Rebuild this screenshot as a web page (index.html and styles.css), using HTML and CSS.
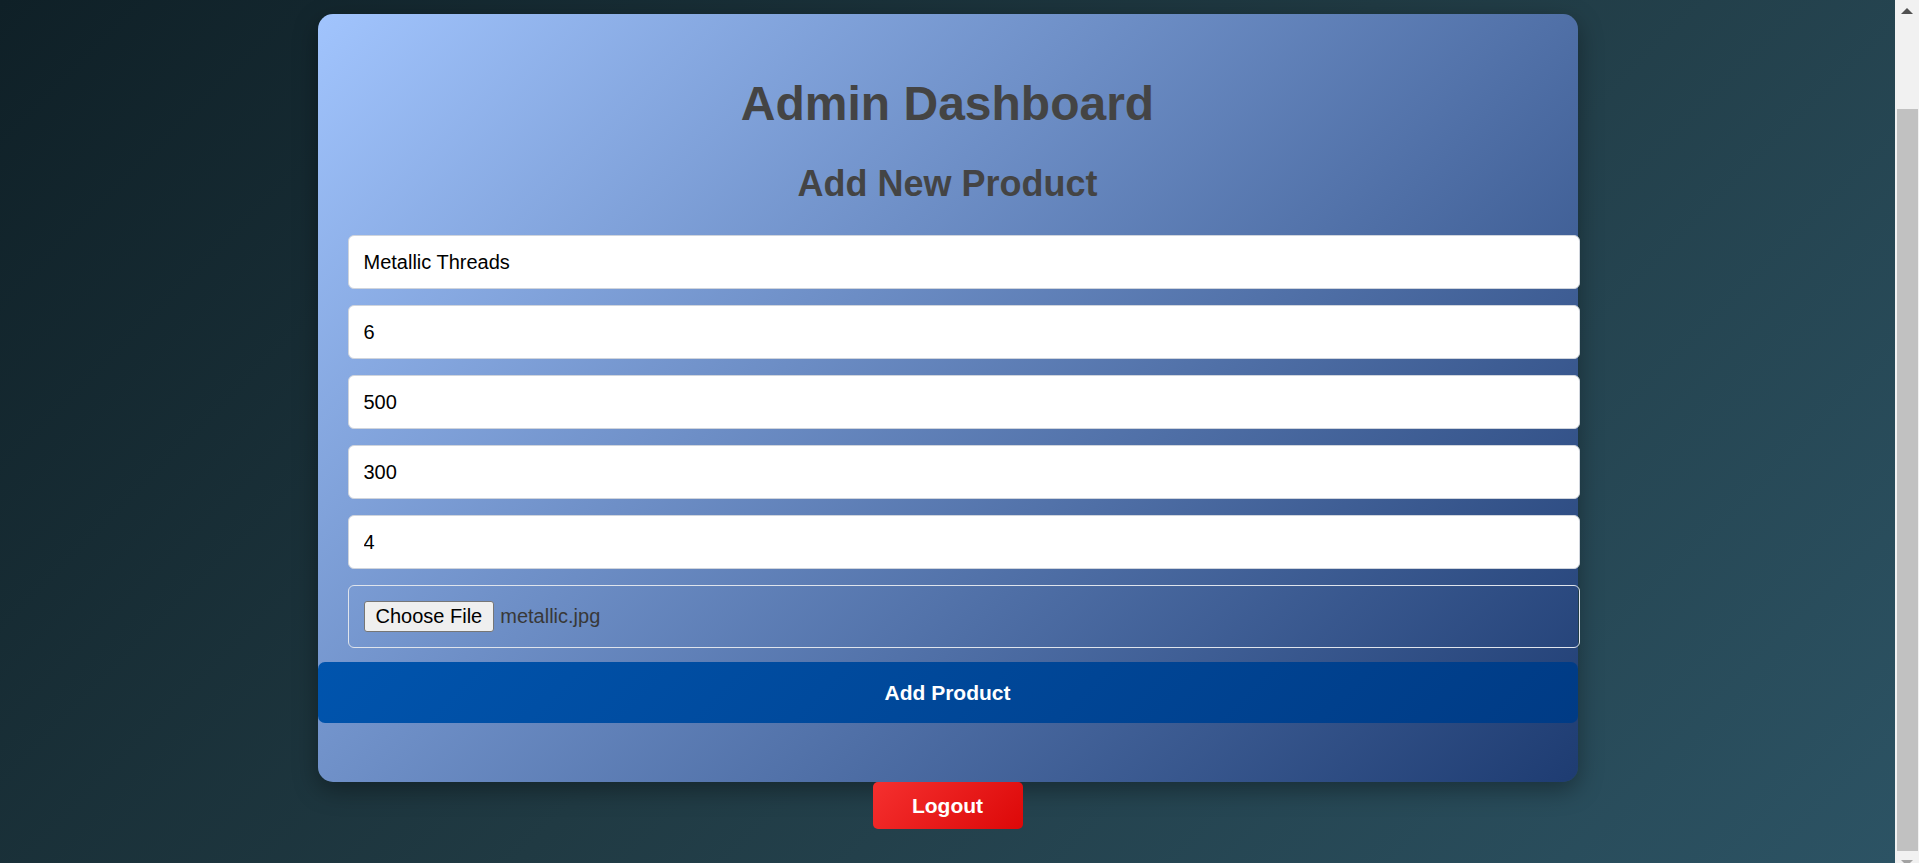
FILE: index.html
```html
<!DOCTYPE html>
<html lang="en">
<head>
<meta charset="utf-8">
<title>Admin Dashboard</title>
<link rel="stylesheet" href="styles.css">
</head>
<body>
  <div class="page">
    <div class="card">
      <h1 class="title">Admin Dashboard</h1>
      <h2 class="subtitle">Add New Product</h2>
      <form class="product-form">
        <input class="field" type="text" value="Metallic Threads">
        <input class="field" type="text" value="6">
        <input class="field" type="text" value="500">
        <input class="field" type="text" value="300">
        <input class="field" type="text" value="4">
        <label class="file-field">
          <span class="file-btn">Choose File</span>
          <span class="file-name">metallic.jpg</span>
        </label>
        <button class="submit-btn" type="button">Add Product</button>
      </form>
    </div>
    <button class="logout-btn" type="button">Logout</button>
  </div>
  <div class="scrollbar" aria-hidden="true">
    <div class="sb-top"><span class="sb-arrow-up"></span></div>
    <div class="sb-thumb"></div>
    <div class="sb-bottom"><span class="sb-arrow-down"></span></div>
  </div>
</body>
</html>
```

FILE: styles.css
```css
html, body {
  margin: 0;
  padding: 0;
  height: 100%;
}

body {
  display: flex;
  height: 100vh;
  overflow: hidden;
  font-family: "Liberation Sans", Arial, sans-serif;
}

.page {
  flex: 1;
  min-width: 0;
  display: flex;
  flex-direction: column;
  align-items: center;
  padding-top: 14px;
  background: linear-gradient(135deg, #0f2027 0%, #203a43 50%, #2c5364 100%);
}

.card {
  width: 1200px;
  padding: 30px;
  border-radius: 15px;
  background: linear-gradient(135deg, #a1c4fd 0%, #1e3c72 100%);
  box-shadow: 0 8px 24px rgba(0, 0, 0, 0.35);
}

.title {
  margin: 32px 0 0;
  font-size: 48px;
  font-weight: bold;
  color: #444;
  text-align: center;
}

.subtitle {
  margin: 32px 0 30px;
  font-size: 36px;
  font-weight: bold;
  color: #444;
  text-align: center;
}

.product-form {
  display: flex;
  flex-direction: column;
  margin: 0 0 29px;
}

.field {
  display: block;
  box-sizing: content-box;
  width: 100%;
  margin: 0 0 16px;
  padding: 15px;
  border: 1px solid #cfd4dc;
  border-radius: 6px;
  background: #fff;
  font-family: "Liberation Sans", Arial, sans-serif;
  font-size: 20px;
  line-height: 22px;
  color: #000;
  outline: none;
}

.file-field {
  display: flex;
  align-items: center;
  box-sizing: content-box;
  width: 100%;
  margin: 0 0 14px;
  padding: 15px;
  border: 1px solid #dfe4ec;
  border-radius: 6px;
  font-size: 20px;
  color: #333;
}

.file-btn {
  display: inline-block;
  padding: 3px 11px;
  line-height: 23px;
  border: 1px solid #767676;
  border-radius: 3px;
  background: #efefef;
  color: #000;
  margin-right: 6px;
}

.file-name {
  line-height: 23px;
  color: #383838;
}

.submit-btn {
  width: calc(100% + 60px);
  margin: 0 0 0 -30px;
  height: 61px;
  border: none;
  border-radius: 7px;
  background: linear-gradient(135deg, #0054ad 0%, #003b85 100%);
  color: #fff;
  font-family: "Liberation Sans", Arial, sans-serif;
  font-size: 21px;
  font-weight: bold;
}

.logout-btn {
  width: 150px;
  height: 47px;
  margin-top: 0;
  border: none;
  border-radius: 5px;
  background: linear-gradient(135deg, #f5302f 0%, #dc0808 100%);
  color: #fff;
  font-family: "Liberation Sans", Arial, sans-serif;
  font-size: 21px;
  font-weight: bold;
}

.scrollbar {
  flex: none;
  width: 24px;
  height: 100vh;
  overflow: hidden;
  background: #f1f1f1;
  display: flex;
  flex-direction: column;
}

.sb-top {
  height: 109px;
  flex: none;
  display: flex;
  justify-content: center;
}

.sb-arrow-up {
  margin-top: 8px;
  width: 0;
  height: 0;
  border-left: 6px solid transparent;
  border-right: 6px solid transparent;
  border-bottom: 6px solid #505050;
}

.sb-thumb {
  flex: none;
  height: 742px;
  width: 21px;
  margin-left: 2px;
  background: #c1c1c1;
}

.sb-bottom {
  flex: none;
  display: flex;
  justify-content: center;
}

.sb-arrow-down {
  margin-top: 9px;
  width: 0;
  height: 0;
  border-left: 6px solid transparent;
  border-right: 6px solid transparent;
  border-top: 6px solid #a3a3a3;
}
```
